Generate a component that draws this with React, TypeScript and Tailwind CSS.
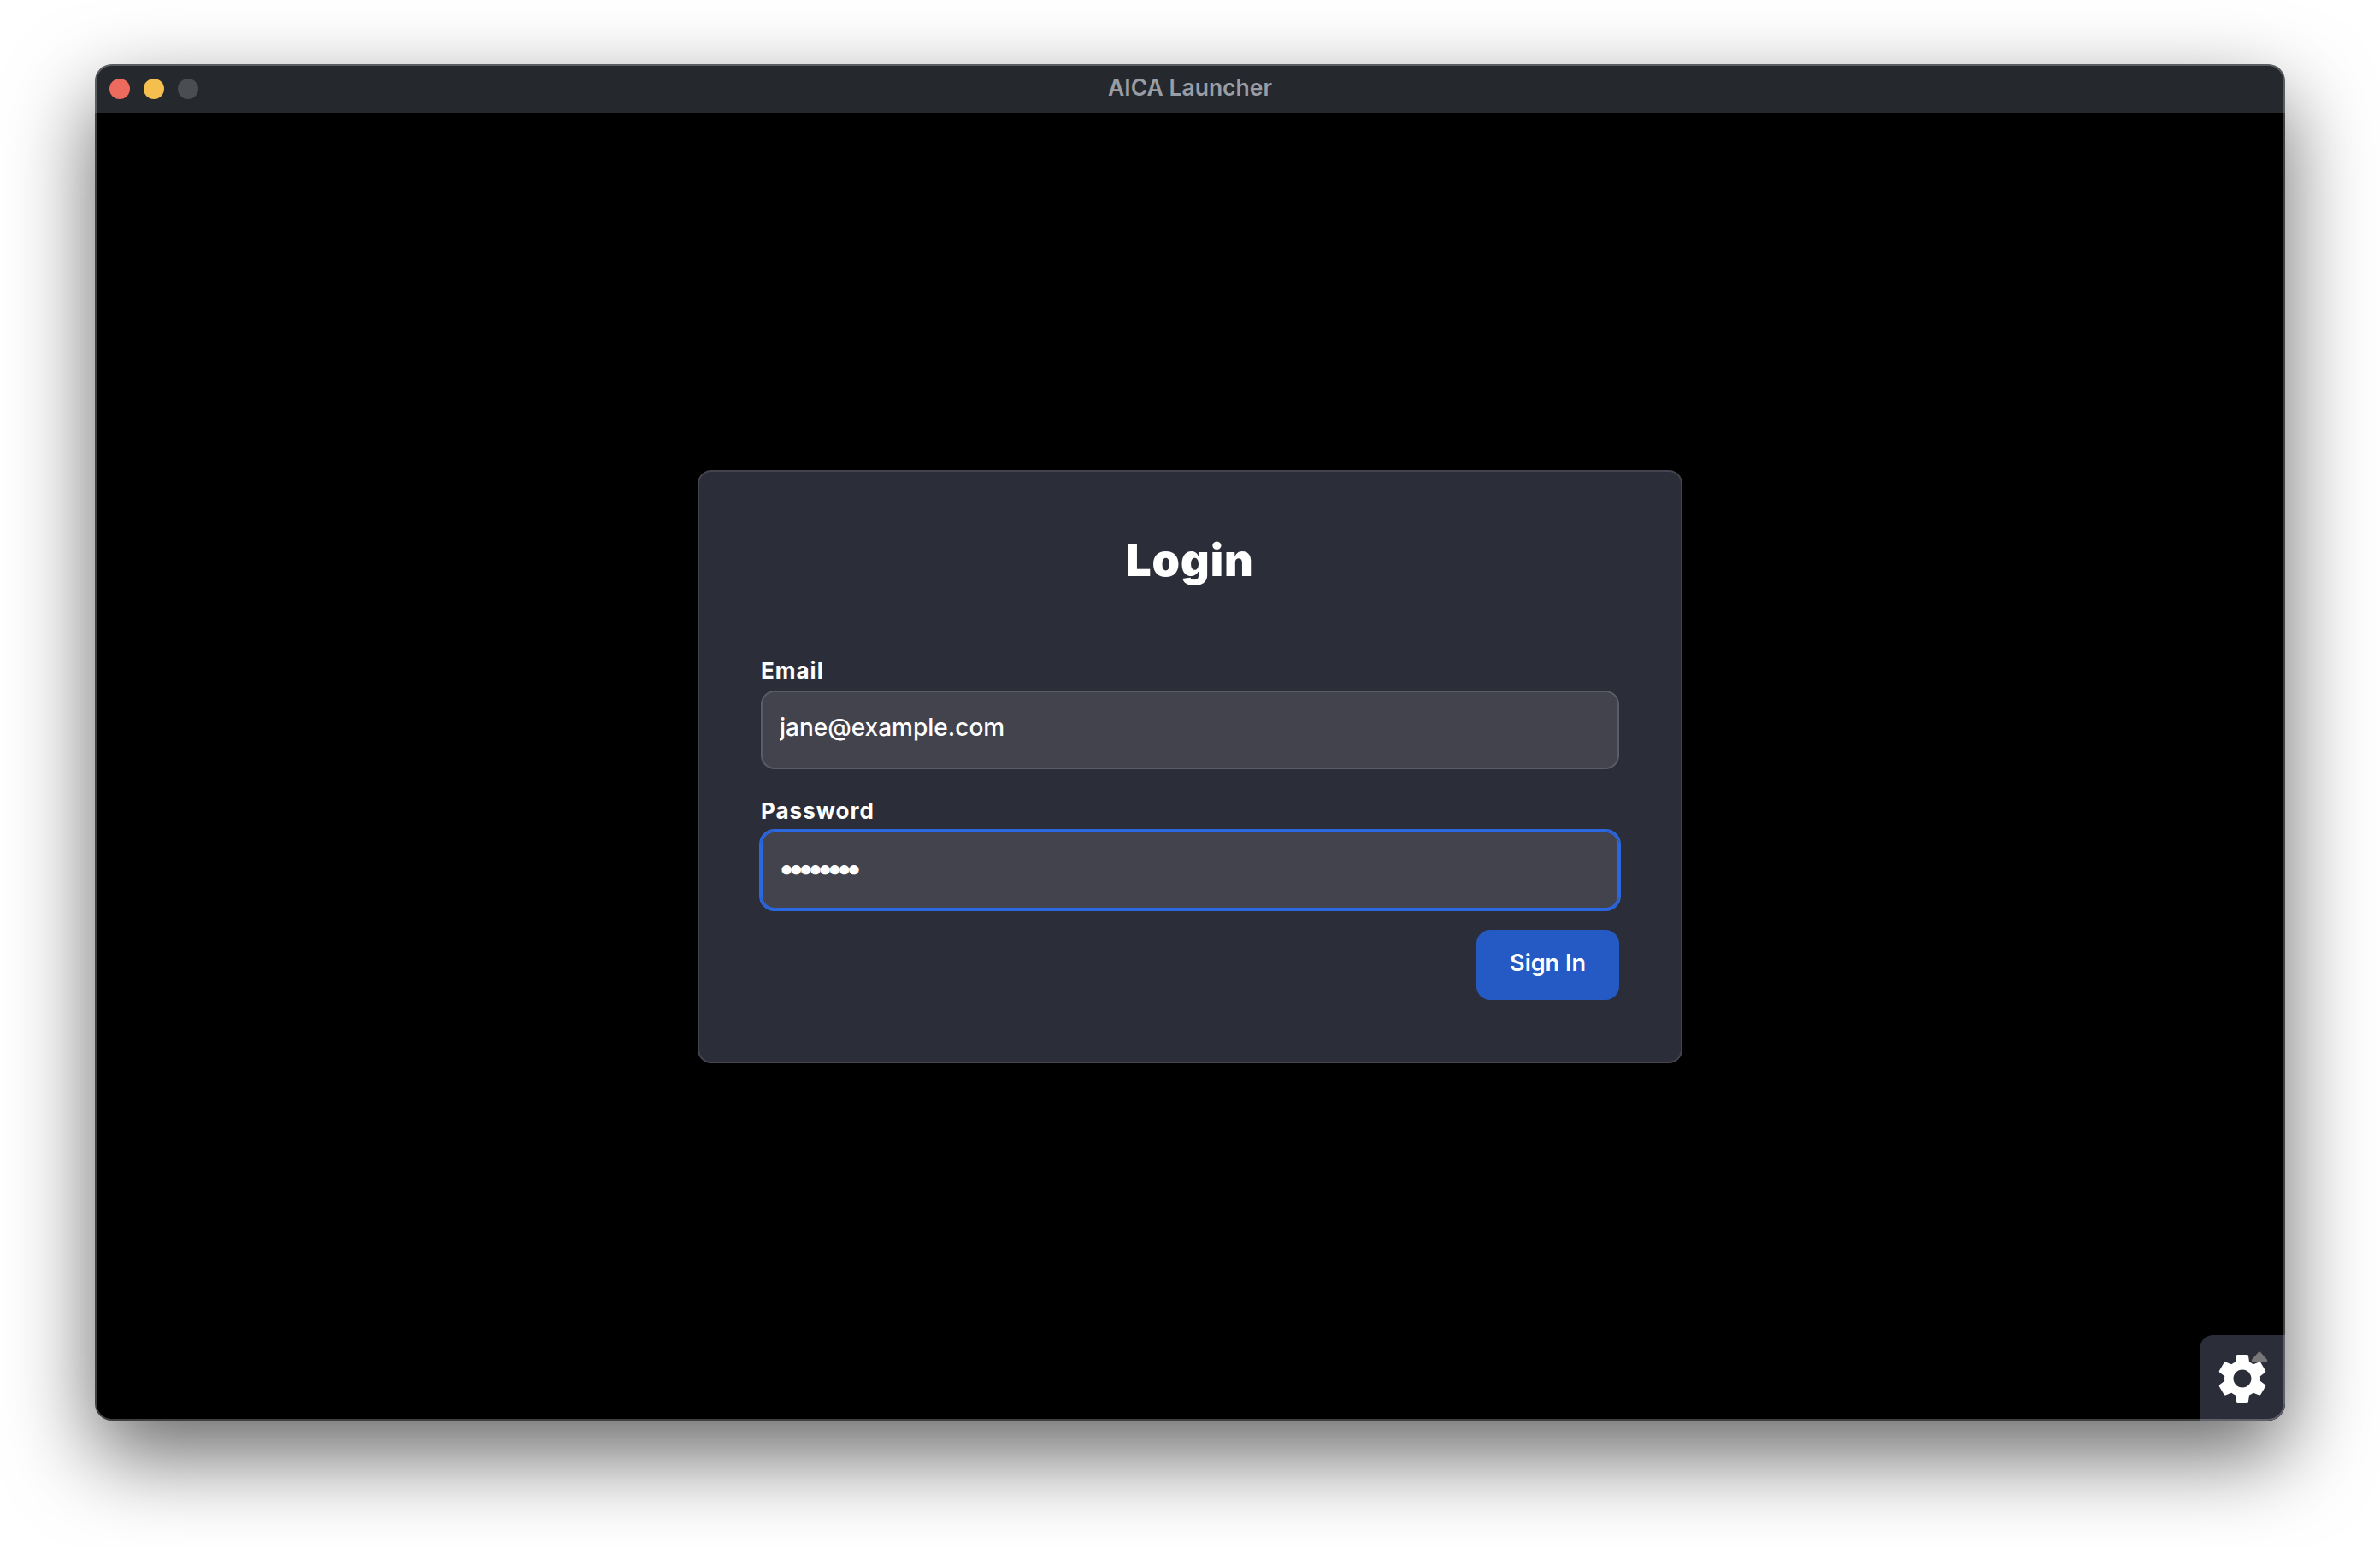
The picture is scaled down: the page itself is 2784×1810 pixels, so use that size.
import {MdSettings} from "react-icons/md"

const Field = ({label, type, value, focused}: {label: string; type: string; value: string; focused?: boolean}) => (
  <label className="block">
    <span className="block h-[41px] text-[26px] leading-[35px] font-bold tracking-[1px] text-white">{label}</span>
    <input
      readOnly
      type={type}
      value={value}
      className={`block h-[92px] w-full rounded-[16px] border-2 bg-[#43434e] text-white ${
        focused
          ? "border-[#2b68e0] pb-[6px] pl-[18px] text-[36px] tracking-[-9px] outline-2 outline-[#2b68e0]"
          : "border-[#5c5c68] px-[20px] pb-[6px] text-[28px] font-medium outline-none"
      }`}
    />
  </label>
)

export default function App() {
  return (
    <div className="h-screen w-screen overflow-hidden bg-white px-[111px] pt-[75px] font-['Inter',sans-serif]">
      <div className="relative flex h-[1587px] flex-col overflow-hidden rounded-[20px] shadow-[0_40px_100px_rgba(0,0,0,0.6)]">
        <header className="grid h-[57px] shrink-0 grid-cols-[1fr_auto_1fr] items-center bg-[#25282d] px-[17px] pb-[2px]">
          <div className="flex gap-[16px] pt-[3px]">
            <span className="h-[24px] w-[24px] rounded-full bg-[#ed6a5e]" />
            <span className="h-[24px] w-[24px] rounded-full bg-[#f4bf4f]" />
            <span className="h-[24px] w-[24px] rounded-full bg-[#4a4d52]" />
          </div>
          <h1 className="text-[26.5px] font-semibold text-[#9a9da3]">AICA Launcher</h1>
          <div />
        </header>

        <main className="relative flex flex-1 items-center justify-center bg-black">
          <div className="w-[1152px] rounded-[16px] border-2 border-[#44444f] bg-[#2b2d38] px-[72px] pt-[74px] pb-[72px]">
            <h2 className="mb-[81px] text-center text-[52px] leading-[60px] font-black tracking-[1px] text-white">Login</h2>
            <div className="flex flex-col gap-[31px]">
              <Field label="Email" type="email" value="jane@example.com" />
              <Field label="Password" type="password" value="password" focused />
            </div>
            <div className="mt-[24px] flex justify-end">
              <button className="h-[82px] w-[167px] rounded-[16px] bg-[#255ac4] pb-[4px] text-[27px] font-semibold text-white">
                Sign In
              </button>
            </div>
          </div>

          <button className="absolute right-0 bottom-0 flex h-[100px] w-[100px] items-center justify-center rounded-tl-[16px] bg-[#2b2d38] pt-[2px]">
            <svg viewBox="0 0 20 13" className="absolute top-[19px] left-[60px] h-[13px] w-[20px]">
              <path d="M8.6 1.2a2 2 0 0 1 2.8 0l7.4 8.4c.9 1.2.2 3.2-1.4 3.2H2.6C1 12.800.3 10.800 1.200 9.600z" fill="#777777" />
            </svg>
            <MdSettings className="relative text-[70px] text-white" />
          </button>
        </main>

        <div className="pointer-events-none absolute inset-0 rounded-[20px] border-2 border-white/25" />
      </div>
    </div>
  )
}
